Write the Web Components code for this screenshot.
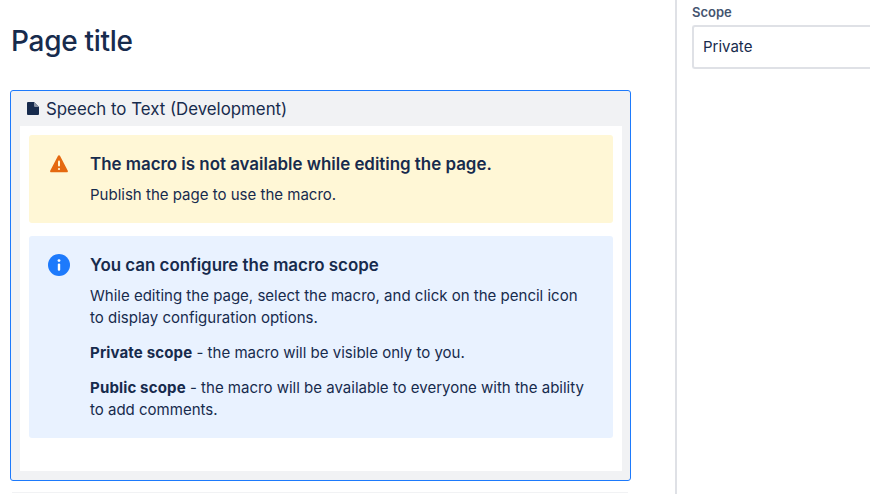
<!DOCTYPE html>
<html><head><meta charset="utf-8"><title>Page title</title>
<style>
html,body{margin:0;padding:0;width:870px;height:494px;overflow:hidden;background:#fff;font-family:Inter,"Noto Sans",sans-serif;color:#172B4D;}
</style></head><body>
<template id="app-t"><style>
:host{display:grid;grid-template-columns:675px 2px 1fr;width:870px;height:494px;overflow:hidden}
.main{padding:0 0 0 10px;min-width:0;width:621px}
.div{background:#DFE1E6}
.side{padding:6px 0 0 15px;min-width:0}
h1{margin:0;font:500 28px/36px Inter,sans-serif;letter-spacing:-.3px;color:#172B4D;padding:23px 0 0 1px;height:72px;box-sizing:border-box}
.rule{height:1px;background:#F1F2F4;margin:11px 3px 0 2px}
</style>
<div class="main"><h1>Page title</h1><slot name="main"></slot><div class="rule"></div></div>
<div class="div"></div>
<div class="side"><slot name="side"></slot></div>
</template>

<template id="macro-t"><style>
:host{display:block;box-sizing:border-box;width:621px;height:391px;margin-top:18px;border:1px solid #1D7AFC;border-radius:3px;background:#F1F2F4;padding:0 8px 9px 9px}
.title{height:35px;display:flex;align-items:center;gap:7px;padding-left:7px;font:400 16.84px/20px Inter,sans-serif;color:#172B4D}
svg{flex:none}
.body{background:#fff;height:345px;box-sizing:border-box;padding:9px 9px 0 9px;display:flex;flex-direction:column;gap:13px}
</style>
<div class="title"><svg width="12" height="13" viewBox="0 0 12 13"><path d="M1 0h6l5 5v7a1 1 0 0 1-1 1H1a1 1 0 0 1-1-1V1a1 1 0 0 1 1-1z" fill="#172B4D"/><path d="M7 0v3.900A1.100 1.100 0 0 0 8.100 5H12z" fill="#8993A4"/></svg><slot name="title"></slot></div>
<div class="body"><slot></slot></div>
</template>

<template id="panel-t"><style>
:host{display:grid;grid-template-columns:61px 1fr;box-sizing:border-box;border-radius:3px;padding:19px 12px 0 0;font:400 15px/22px Inter,sans-serif;color:#172B4D}
:host([kind=warn]){background:#FFF7D6;height:88px}
:host([kind=info]){background:#E9F2FF;height:202px}
.ic{display:flex;justify-content:center;height:20px}
h2{margin:0 0 10px;font:600 16.9px/20px Inter,sans-serif;color:#172B4D}
::slotted(p){margin:0 0 13px;font:400 15.03px/22px Inter,sans-serif}
</style>
<div class="ic"><slot name="icon"></slot></div>
<div><h2><slot name="head"></slot></h2><slot></slot></div>
</template>

<template id="field-t"><style>
:host{display:block}
label{display:block;font:600 13px/13px Inter,sans-serif;color:#44546F;margin-bottom:6px}
.box{box-sizing:border-box;width:220px;height:44px;border:2px solid #DFE1E6;border-right:0;border-radius:3px 0 0 3px;padding:0 9px;display:flex;align-items:center;font:400 15px/20px Inter,sans-serif;color:#172B4D}
</style>
<label><slot name="label"></slot></label><div class="box"><slot></slot></div>
</template>

<app-shell>
  <macro-box slot="main">
    <span slot="title">Speech to Text (Development)</span>
    <note-panel kind="warn">
      <svg slot="icon" width="20" height="20" viewBox="0 0 20 20" style="margin-left:-1px"><path d="M10 1.300c.5 0 .9.300 1.100.7l7.700 14.700c.4.800-.1 1.600-1 1.600H2.200c-.9 0-1.400-.8-1-1.600L8.900 2c.2-.4.6-.7 1.100-.7z" fill="#E56910"/><rect x="9" y="6.500" width="2" height="6" rx="1" fill="#FFF7D6"/><circle cx="10" cy="15" r="1.100" fill="#FFF7D6"/></svg>
      <span slot="head">The macro is not available while editing the page.</span>
      <p>Publish the page to use the macro.</p>
    </note-panel>
    <note-panel kind="info">
      <svg slot="icon" width="22" height="22" viewBox="0 0 22 22" style="margin-top:-1px;margin-left:-1px"><circle cx="11" cy="11" r="11" fill="#1D7AFC"/><circle cx="11" cy="6.600" r="1.400" fill="#fff"/><rect x="9.800" y="9.400" width="2.400" height="7.400" rx="1.100" fill="#fff"/></svg>
      <span slot="head">You can configure the macro scope</span>
      <p>While editing the page, select the macro, and click on the pencil icon<br>to display configuration options.</p>
      <p><b style="font-weight:700;letter-spacing:.15px">Private scope</b> - the macro will be visible only to you.</p>
      <p><b style="font-weight:700;letter-spacing:.15px">Public scope</b> - the macro will be available to everyone with the ability<br>to add comments.</p>
    </note-panel>
  </macro-box>
  <form-field slot="side"><span slot="label">Scope</span>Private</form-field>
</app-shell>

<script>
for (const [name,id] of [['app-shell','app-t'],['macro-box','macro-t'],['note-panel','panel-t'],['form-field','field-t']]) {
  customElements.define(name, class extends HTMLElement {
    constructor(){super();this.attachShadow({mode:'open'}).appendChild(document.getElementById(id).content.cloneNode(true));}
  });
}
</script>
</body></html>
